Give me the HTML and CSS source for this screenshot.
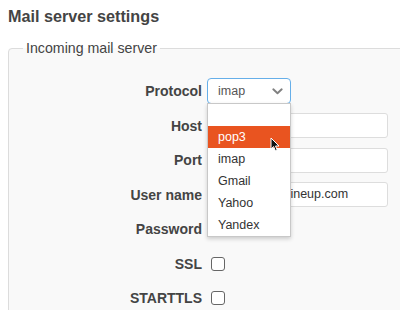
FILE: index.html
```html
<!DOCTYPE html>
<html>
<head>
<meta charset="utf-8">
<link rel="stylesheet" href="styles.css">
</head>
<body>
<h1 class="title">Mail server settings</h1>
<fieldset class="box">
  <legend class="legend">Incoming mail server</legend>
  <div class="form">
    <label class="lbl">Protocol</label>
    <div class="ctl">
      <div class="select">
        <span class="select-val">imap</span>
        <svg class="chev" width="11" height="7" viewBox="0 0 11 7"><path d="M1.3 1.3 L5.5 5.3 L9.7 1.3" fill="none" stroke="#808080" stroke-width="1.9" stroke-linecap="round" stroke-linejoin="round"/></svg>
        <ul class="menu">
          <li class="opt">&nbsp;</li>
          <li class="opt opt-sel">pop3</li>
          <li class="opt">imap</li>
          <li class="opt">Gmail</li>
          <li class="opt">Yahoo</li>
          <li class="opt">Yandex</li>
          <svg class="cursor" width="10" height="15" viewBox="0 0 10 15"><path d="M1 1 L1 12 L3.6 9.6 L5.4 13.8 L7.2 13 L5.5 9 L9 9 Z" fill="#111" stroke="#fff" stroke-width="1" stroke-linejoin="round"/></svg>
        </ul>
      </div>
    </div>
    <label class="lbl">Host</label>
    <div class="ctl"><div class="input"></div></div>
    <label class="lbl">Port</label>
    <div class="ctl"><div class="input"></div></div>
    <label class="lbl">User name</label>
    <div class="ctl"><div class="input">mailbox@onlineup.com</div></div>
    <label class="lbl">Password</label>
    <div class="ctl"></div>
    <label class="lbl">SSL</label>
    <div class="ctl"><span class="check"></span></div>
    <label class="lbl">STARTTLS</label>
    <div class="ctl"><span class="check"></span></div>
  </div>
</fieldset>
</body>
</html>
```
FILE: styles.css
```css
html, body {
  margin: 0;
  padding: 0;
  overflow: hidden;
  background: #ffffff;
}
body {
  padding: 6px 0 0 8px;
  font-family: "Liberation Sans", Arial, sans-serif;
  color: #444;
  width: 600px;
  height: 310px;
}
.title {
  margin: 0;
  font-size: 16.2px;
  line-height: 20px;
  font-weight: bold;
  color: #444;
}
.box {
  margin: 14px 0 0 0;
  width: 460px;
  border: 1px solid #dcdcdc;
  border-radius: 4px;
  background: #f9f9f9;
  padding: 22.5px 14px 20px 14px;
}
.legend {
  padding: 0 3px;
  font-size: 14.2px;
  color: #444;
}
.form {
  display: grid;
  grid-template-columns: 179px 181px;
  grid-auto-rows: 25px;
  column-gap: 5px;
  row-gap: 9.5px;
}
.lbl {
  align-self: center;
  text-align: right;
  font-size: 14px;
  font-weight: bold;
  color: #444;
}
.ctl {
  display: flex;
  align-items: center;
  position: relative;
}
.select {
  position: relative;
  box-sizing: border-box;
  width: 84px;
  height: 26px;
  border: 1px solid #66afe9;
  border-radius: 4px;
  background: #fff;
  display: flex;
  align-items: center;
  padding-left: 10px;
  font-size: 12.5px;
  color: #555;
  z-index: 2;
}
.select-val {
  flex: 1;
}
.chev {
  margin-right: 7px;
}
.menu {
  position: absolute;
  left: -1px;
  top: 24px;
  width: 84px;
  box-sizing: border-box;
  margin: 0;
  padding: 0;
  list-style: none;
  background: #fff;
  border: 1px solid #c8c8c8;
  box-shadow: 0 2px 4px rgba(0, 0, 0, 0.18);
}
.opt {
  height: 22px;
  line-height: 22px;
  padding-left: 10px;
  font-size: 12.5px;
  color: #333;
}
.opt-sel {
  background: #e95420;
  color: #fff;
}
.cursor {
  position: absolute;
  left: 62px;
  top: 33px;
}
.input {
  box-sizing: border-box;
  width: 181px;
  height: 25px;
  border: 1px solid #dddddd;
  border-radius: 3px;
  background: #fff;
  padding-left: 10px;
  line-height: 23px;
  font-size: 12.5px;
  color: #333;
  white-space: nowrap;
  overflow: hidden;
}
.check {
  box-sizing: border-box;
  width: 14px;
  height: 14px;
  margin-left: 4px;
  border: 1px solid #666;
  border-radius: 3px;
  background: #fff;
}
```
